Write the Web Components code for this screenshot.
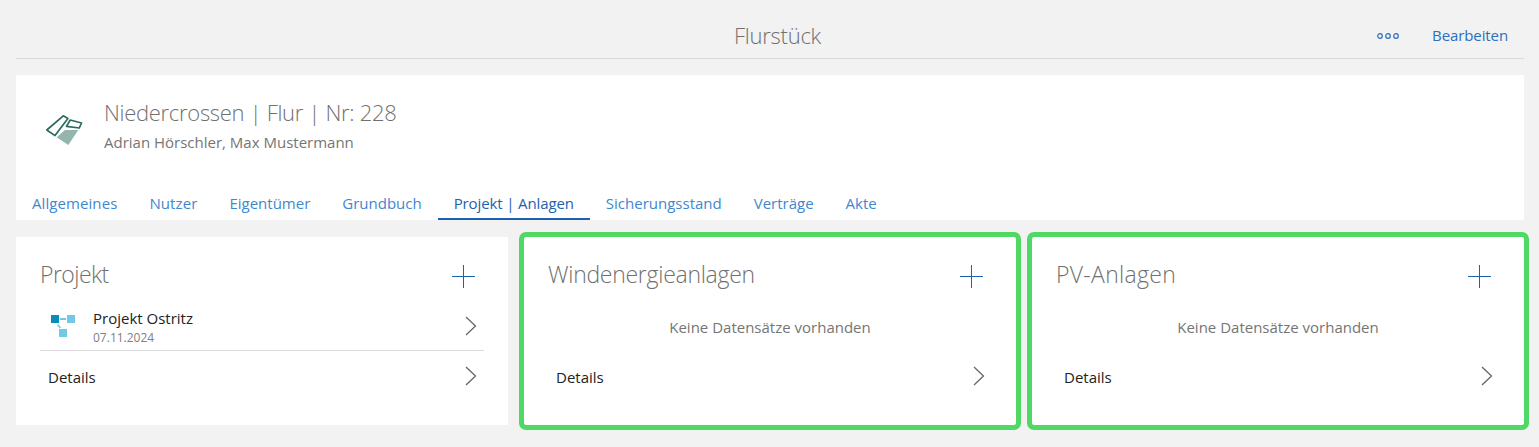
<!DOCTYPE html>
<html lang="de">
<head>
<meta charset="utf-8">
<title>Flurstück</title>
<style>
  html, body { margin: 0; height: 100%; background: #f2f2f2; overflow: hidden; }
  body { font-family: "Open Sans", "Liberation Sans", sans-serif; }
  #page { display: block; padding: 0 15px 0 16px; }
</style>
</head>
<body>
<div id="page">
  <page-bar title="Flurstück" action="Bearbeiten"></page-bar>
  <object-header heading="Niedercrossen | Flur | Nr: 228" sub="Adrian Hörschler, Max Mustermann">
    <tab-item style="letter-spacing:.08px">Allgemeines</tab-item>
    <tab-item style="letter-spacing:.1px">Nutzer</tab-item>
    <tab-item>Eigentümer</tab-item>
    <tab-item>Grundbuch</tab-item>
    <tab-item selected style="letter-spacing:-.12px">Projekt | Anlagen</tab-item>
    <tab-item>Sicherungsstand</tab-item>
    <tab-item>Verträge</tab-item>
    <tab-item>Akte</tab-item>
  </object-header>
  <card-row>
    <list-card heading="Projekt" style="letter-spacing:-.55px">
      <project-item name="Projekt Ostritz" date="07.11.2024"></project-item>
    </list-card>
    <list-card heading="Windenergieanlagen" marked empty></list-card>
    <list-card heading="PV-Anlagen" marked empty style="letter-spacing:.3px"></list-card>
  </card-row>
</div>

<script>
const chevron = `<svg width="12" height="20" viewBox="0 0 12 20" fill="none" stroke="#666" stroke-width="1.3" style="display:block"><path d="M1 1l9.5 9L1 19"/></svg>`;

class PageBar extends HTMLElement {
  constructor() {
    super();
    this.attachShadow({ mode: "open" }).innerHTML = `
      <style>
        :host { display: block; height: 59px; box-sizing: border-box; border-bottom: 1px solid #d9d9d9; position: relative; }
        .title { padding-top: 19px; text-align: center; font-size: 22px; line-height: 32px; font-weight: 300; color: #707070; letter-spacing: -.25px; margin-left: 15px; }
        .actions { position: absolute; right: 16px; top: 27px; display: flex; align-items: center; gap: 33px; }
        a { color: #2b6fbd; font-size: 15px; line-height: 17px; letter-spacing: -.1px; }
        svg { display: block; }
      </style>
      <div class="title"></div>
      <div class="actions">
        <svg width="22" height="6" viewBox="0 0 22 6" fill="none" stroke="#2b6fbd" stroke-width="1.2"><circle cx="3" cy="3" r="2.3"/><circle cx="11" cy="3" r="2.3"/><circle cx="19" cy="3" r="2.3"/></svg>
        <a></a>
      </div>`;
  }
  connectedCallback() {
    this.shadowRoot.querySelector(".title").textContent = this.getAttribute("title");
    this.shadowRoot.querySelector("a").textContent = this.getAttribute("action");
  }
}

class ObjectHeader extends HTMLElement {
  constructor() {
    super();
    this.attachShadow({ mode: "open" }).innerHTML = `
      <style>
        :host { display: block; margin-top: 16px; height: 145px; background: #fff; position: relative; }
        .top { display: flex; padding: 23px 0 0 27px; height: 81px; }
        svg { margin-top: 13px; width: 40px; height: 36px; flex: none; }
        .text { margin-left: 21px; }
        h1 { margin: 0; font-size: 22px; line-height: 28px; font-weight: 300; color: #707070; letter-spacing: -.3px; }
        p { margin: 7px 0 0; font-size: 15px; line-height: 18px; color: #757575; }
        nav { position: absolute; left: 0; bottom: 0; display: flex; }
      </style>
      <div class="top">
        <svg viewBox="0 0 40 36" fill="none" stroke="#2a6b5f" stroke-width="1.7" stroke-linejoin="round">
          <path d="M20.3 4.8l4.6 2.6L12 24.6 3.8 19z"/>
          <path d="M27.2 9l11.3 3-2.2 5-12.8-1.6z"/>
          <path d="M22 19h13.3L25.3 34 13.7 26.3z" fill="#93b5ae" stroke="none"/>
        </svg>
        <div class="text"><h1></h1><p></p></div>
      </div>
      <nav><slot></slot></nav>`;
  }
  connectedCallback() {
    this.shadowRoot.querySelector("h1").textContent = this.getAttribute("heading");
    this.shadowRoot.querySelector("p").textContent = this.getAttribute("sub");
  }
}

class TabItem extends HTMLElement {
  constructor() {
    super();
    this.attachShadow({ mode: "open" }).innerHTML = `
      <style>
        :host { display: block; padding: 0 16px; height: 32px; box-sizing: border-box; color: #3f87cf; font-size: 15px; line-height: 30px; white-space: nowrap; }
        :host([selected]) { color: #1d62b0; border-bottom: 2px solid #1d62b0; }
      </style>
      <slot></slot>`;
  }
}

class CardRow extends HTMLElement {
  constructor() {
    super();
    this.attachShadow({ mode: "open" }).innerHTML = `
      <style>
        :host { display: grid; grid-template-columns: repeat(3, 492px); gap: 16px; margin-top: 17px; }
      </style>
      <slot></slot>`;
  }
}

class ListCard extends HTMLElement {
  constructor() {
    super();
    this.attachShadow({ mode: "open" }).innerHTML = `
      <style>
        :host { display: block; height: 188px; background: #fff; padding: 0 24px; box-sizing: border-box; letter-spacing: -.28px; }
        :host([marked]) { outline: 5px solid #4fd964; border-radius: 2px; }
        header { display: flex; justify-content: space-between; align-items: center; height: 78px; }
        h2 { margin: -4px 0 0; font-size: 23px; font-weight: 300; color: #707070; }
        header svg { margin-right: 9px; }
        .none { display: none; text-align: center; color: #757575; font-size: 15px; line-height: 20px; letter-spacing: 0; height: 24px; margin-top: 2px; }
        :host([empty]) .none { display: block; }
        .details { display: flex; justify-content: space-between; align-items: center; height: 52px; padding: 0 8px; color: #222; font-size: 15px; letter-spacing: 0; }
        :host([empty]) .details { margin-top: 11px; height: 50px; }
        .details svg { margin: -2px -1px 0 0; }
      </style>
      <header>
        <h2></h2>
        <svg width="24" height="24" viewBox="0 0 24 24" stroke="#1d62b0" stroke-width="1" shape-rendering="crispEdges"><path d="M1 12.5h23M12.5 1v23"/></svg>
      </header>
      <slot></slot>
      <div class="none">Keine Datensätze vorhanden</div>
      <div class="details"><span>Details</span>${chevron}</div>`;
  }
  connectedCallback() {
    this.shadowRoot.querySelector("h2").textContent = this.getAttribute("heading");
  }
}

class ProjectItem extends HTMLElement {
  constructor() {
    super();
    this.attachShadow({ mode: "open" }).innerHTML = `
      <style>
        :host { display: flex; align-items: flex-start; height: 38px; border-bottom: 1px solid #d9d9d9; margin-top: -3px; letter-spacing: 0; }
        .ico { margin: 3px 0 0 11px; width: 24px; height: 22px; flex: none; }
        .text { margin: -3px 0 0 18px; }
        .name { color: #222; font-size: 15px; line-height: 18px; }
        .date { color: #808080; font-size: 12px; line-height: 16px; margin-top: 3px; }
        .go { margin: 4px 7px 0 auto; }
      </style>
      <svg class="ico" viewBox="0 0 24 22">
        <rect x="0" y="0" width="8" height="8" fill="#0a8bb8"/>
        <rect x="16" y="0" width="8" height="8" fill="#73c9e4"/>
        <rect x="8" y="14" width="8" height="8" fill="#73c9e4"/>
        <rect x="9" y="3" width="6" height="2" fill="#73c9e4"/>
        <path d="M6.5 9.5l3 3.5" stroke="#73c9e4" stroke-width="1.6"/>
      </svg>
      <div class="text"><div class="name"></div><div class="date"></div></div>
      <span class="go">${chevron}</span>`;
  }
  connectedCallback() {
    this.shadowRoot.querySelector(".name").textContent = this.getAttribute("name");
    this.shadowRoot.querySelector(".date").textContent = this.getAttribute("date");
  }
}

customElements.define("page-bar", PageBar);
customElements.define("object-header", ObjectHeader);
customElements.define("tab-item", TabItem);
customElements.define("card-row", CardRow);
customElements.define("list-card", ListCard);
customElements.define("project-item", ProjectItem);
</script>
</body>
</html>
